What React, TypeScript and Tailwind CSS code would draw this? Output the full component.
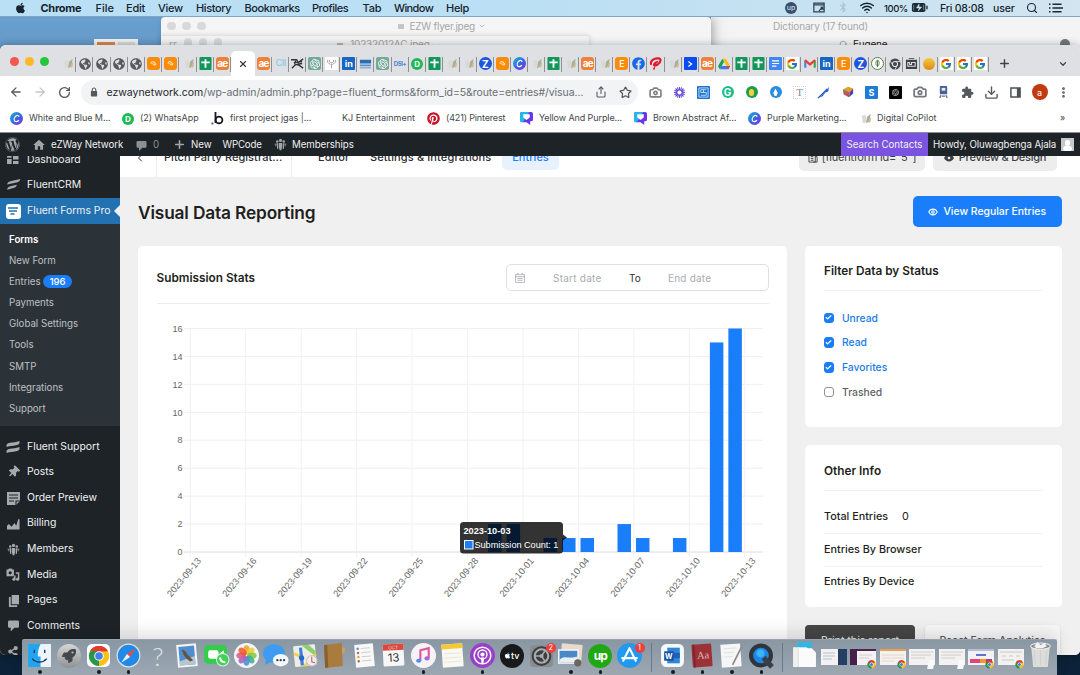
import React from "react";
import {
  ArrowLeft, ArrowRight, RotateCw, Share, Star, Camera, Download, MoreVertical,
  Plus, ChevronDown, ChevronLeft, Calendar, Eye, Check, X, Search, Wifi,
} from "lucide-react";
import { FcGoogle } from "react-icons/fc";
import { FaApple, FaFacebook, FaPinterest, FaWordpress, FaGlobeAmericas, FaShareAlt, FaThumbtack, FaBluetoothB, FaRocket, FaPuzzlePiece } from "react-icons/fa";
import { MdHome } from "react-icons/md";
import { SiOpenai } from "react-icons/si";

/* ---------- small glyphs ---------- */

const Badge = ({ className, children }: { className: string; children?: React.ReactNode }) => (
  <span className={"flex h-[13px] w-[13px] items-center justify-center overflow-hidden text-[9px] font-bold leading-none text-white " + className}>
    {children}
  </span>
);

const Leaf = () => (
  <svg viewBox="0 0 14 14" className="ml-[4px] h-[13px] w-[13px]">
    <path d="M1 4l4-1 1 8-4 1z" fill="#d9d9d7" />
    <path d="M5.500 12l1-7 4-3-1.500 8z" fill="#adae94" />
    <path d="M7 11l4-6-1 6z" fill="#cbb98e" />
  </svg>
);

const Canva = () => (
  <svg viewBox="0 0 14 14" className="h-[13px] w-[13px]">
    <defs>
      <linearGradient id="cv" x1="0" y1="0" x2="1" y2="1">
        <stop offset="0" stopColor="#12b9d6" />
        <stop offset=".55" stopColor="#3c62e0" />
        <stop offset="1" stopColor="#8a2be8" />
      </linearGradient>
    </defs>
    <circle cx="7" cy="7" r="7" fill="url(#cv)" />
    <path d="M9.800 5.200C9.400 3.600 7.800 3.300 6.500 4.200 4.600 5.500 4 8 5 9.600c.9 1.400 3.200 1 4.600-.8" fill="none" stroke="#fff" strokeWidth="1.300" />
  </svg>
);

const Sheets = () => (
  <svg viewBox="0 0 14 14" className="h-[13px] w-[13px]">
    <rect x=".5" width="13" height="14" rx="1" fill="#12965a" />
    <path d="M7 2.500v9M2.500 5.800h9" stroke="#fff" strokeWidth="2" />
  </svg>
);

const ChromeLogo = ({ className }: { className: string }) => (
  <svg viewBox="0 0 24 24" className={className}>
    <path d="M12 12L2.470 6.500A11 11 0 0 1 21.530 6.500z" fill="#e33b2e" />
    <path d="M12 12L21.530 6.500A11 11 0 0 1 12 23z" fill="#fbc116" />
    <path d="M12 12v11A11 11 0 0 1 2.470 6.500z" fill="#279847" />
    <path d="M12 6.800h9.700L16.500 14.600z" fill="#fbc116" />
    <path d="M2.470 6.500L7.500 14.600 12 6.800z" fill="#279847" />
    <path d="M2.470 6.500L12 6.800H21.700A11 11 0 0 0 2.470 6.500z" fill="#e33b2e" />
    <circle cx="12" cy="12" r="5.200" fill="#fff" />
    <circle cx="12" cy="12" r="4.100" fill="#3f7fee" />
  </svg>
);

const Tube = () => (
  <svg viewBox="0 0 14 14" className="h-[13px] w-[13px]">
    <path d="M2 0h10a2 2 0 0 1 2 2v6a2 2 0 0 1-2 2h-1v4L7 11H2a2 2 0 0 1-2-2V2a2 2 0 0 1 2-2z" fill="#6a35e8" />
    <path d="M0 2a2 2 0 0 1 2-2h8L3 11H2a2 2 0 0 1-2-2z" fill="#25b6e8" />
    <path d="M3.500 2.500h7V6L7 8.500 3.500 6z" fill="#fff" />
  </svg>
);

const Fluent = ({ className }: { className: string }) => (
  <svg viewBox="0 0 16 14" className={className}>
    <path d="M0.500 6.500C1 3.500 3 2.800 5.500 2.200L16 0c-.5 2.500-2 3.600-4.500 4.100zM0.500 12.500C1 9.500 3 8.800 5.500 8.200l6.500-1.400c-.5 2.300-2 3.200-4 3.700z" fill="currentColor" />
  </svg>
);

const FluentWide = ({ className }: { className: string }) => (
  <svg viewBox="0 0 14 12" className={className}>
    <path d="M.5 6V4C1 2.500 2.500 2.200 4 1.800c3-.8 6-.3 9.500-1.800v2c-.5 1.500-2 1.800-3.500 2.200C7 5 4 4.500.5 6zM.5 12v-2c.5-1.500 2-1.800 3.500-2.200 3-.8 6-.3 9.500-1.800v2c-.5 1.500-2 1.800-3.500 2.200C7 11 4 10.500.5 12z" fill="currentColor" />
  </svg>
);

const Bubble = ({ className }: { className: string }) => (
  <svg viewBox="0 0 12 12" className={className} fill="currentColor">
    <path d="M1.500 0h9A1.500 1.500 0 0 1 12 1.500v5A1.500 1.500 0 0 1 10.500 8H7l-4 4V8H1.500A1.500 1.500 0 0 1 0 6.500v-5A1.500 1.500 0 0 1 1.500 0z" />
  </svg>
);

const People = ({ className }: { className: string }) => (
  <svg viewBox="0 0 16 16" className={className} fill="currentColor">
    <circle cx="8" cy="3" r="2" />
    <circle cx="4" cy="4.200" r="1.500" />
    <circle cx="12" cy="4.200" r="1.500" />
    <path d="M6 6h4v5l-1 4H7l-1-4zM2.800 6.500h2.400v7H4zM10.800 6.500h2.400L12 13.500h-1.200zM.6 7h1.500v4zM13.900 7h1.500l-1.500 4z" />
  </svg>
);

type Fav = string;

const Favicon = ({ kind }: { kind: Fav }) => {
  switch (kind) {
    case "leaf": return <Leaf />;
    case "globe": return <FaGlobeAmericas className="h-[12px] w-[12px] text-[#565a5e]" />;
    case "orange": return <Badge className="rounded-[3px] bg-[#fb8c0a]"><svg viewBox="0 0 12 12" className="h-[9px] w-[9px]"><path d="M3 6.500a2.200 2.200 0 0 1 3.500-2.500L9 6.500a1.500 1.500 0 0 1-2.500 1L4.500 5.800" fill="none" stroke="#ffe2b4" strokeWidth="1.500" /></svg></Badge>;
    case "sheets": return <Sheets />;
    case "ae": return <Badge className="rounded-[3px] bg-[#ee8038] pb-[1px] text-[10px] tracking-[-0.800px]">ae</Badge>;
    case "cii": return <span className="text-[9px] font-semibold tracking-[-0.500px] text-[#93cde6]">CII</span>;
    case "run": return <svg viewBox="0 0 14 14" className="h-[13px] w-[13px]"><path d="M0 3h6l2 3 5-4M1 12l4-4 4 1 4 3M3 6l9-1M5 4L4 8M6 8l6-1" stroke="#333" strokeWidth="1.500" fill="none" /></svg>;
    case "gpt": return <Badge className="rounded-[2px] bg-[#74a898]"><SiOpenai className="h-[10px] w-[10px]" /></Badge>;
    case "sketch": return <span className="flex h-[13px] w-[13px] items-center justify-center bg-white"><svg viewBox="0 0 12 12" className="h-[11px] w-[11px]"><path d="M2 2c-1 2 0 4 3 5M10 2c1 2 0 4-3 5M6 6v5M4 2c-1 2 0 3 2 3s3-1 2-3" stroke="#a59a94" fill="none" /></svg></span>;
    case "in": return <Badge className="rounded-[1px] bg-[#1766c2]">in</Badge>;
    case "train": return <svg viewBox="0 0 14 14" className="h-[13px] w-[13px]"><path d="M1 3h12v4H1z" fill="#2d6db5" /><path d="M1 8h12v2H1z" fill="#5b8fcb" /><path d="M1 11.500h12" stroke="#8fb0d8" strokeWidth="1.500" /></svg>;
    case "dsk": return <span className="text-[6px] font-bold tracking-[-0.400px] text-[#4e86d6]">DSI+</span>;
    case "wa": return <span className="flex h-[12px] w-[12px] items-center justify-center rounded-full bg-[#1eb953] text-[8px] font-bold leading-none text-white">D</span>;
    case "z": return <span className="flex h-[13px] w-[13px] items-center justify-center rounded-full bg-[#1d56dc] text-[10px] font-bold leading-none text-white">Z</span>;
    case "canva": return <Canva />;
    case "c": return <Badge className="rounded-[3px] bg-[#fb8c0a] font-medium">E</Badge>;
    case "fb": return <FaFacebook className="h-[13px] w-[13px] text-[#1769ea]" />;
    case "airtel": return <svg viewBox="0 0 14 14" className="h-[13px] w-[13px]"><path d="M2.500 8.500C.5 4 6 1 10 1.500c3.500.5 3 4-.5 6.500-2 1.500-4.500 1.500-4 0 .5-1.500 3-3 4-2.500" fill="none" stroke="#e01a2c" strokeWidth="2.300" /><path d="M7 9l-1 5-2-1z" fill="#e01a2c" /></svg>;
    case "blue": return <Badge className="rounded-[1px] bg-[#0b4bf2]"><svg viewBox="0 0 10 10" className="h-[8px] w-[8px]"><path d="M3 2l4 3-4 3" fill="none" stroke="#fff" strokeWidth="1.500" /></svg></Badge>;
    case "drive": return <svg viewBox="0 0 14 14" className="h-[12px] w-[12px]"><path d="M5 1h4l5 8h-4z" fill="#fbbc05" /><path d="M5 1l2 3.500L2.200 13 0 9.500z" fill="#18a05c" /><path d="M4 9.300h10L12 13H2.200z" fill="#3d7de8" /><path d="M10 9.300h4L12 13z" fill="#e34133" /></svg>;
    case "docs": return <Badge className="rounded-[1px] bg-[#4285f4]"><svg viewBox="0 0 10 10" className="h-[9px] w-[9px]"><path d="M1 2h8M1 5h8M1 8h5" stroke="#fff" strokeWidth="1.300" /></svg></Badge>;
    case "g": return <span className="flex h-[13px] w-[13px] items-center justify-center bg-white"><FcGoogle className="h-[12px] w-[12px]" /></span>;
    case "gmail": return <svg viewBox="0 0 14 12" className="h-[11px] w-[12px]"><path d="M1.500 11V2.500" stroke="#4285f4" strokeWidth="2.500" /><path d="M12.500 11V2.500" stroke="#34a853" strokeWidth="2.500" /><path d="M1 2l6 5 6-5" stroke="#ea4335" strokeWidth="2.800" fill="none" /></svg>;
    case "ring": return <span className="flex h-[13px] w-[13px] items-center justify-center rounded-full border border-[#5b7f4e] bg-white"><svg viewBox="0 0 10 10" className="h-[9px] w-[9px]"><path d="M5 1v8" stroke="#5b7f4e" strokeWidth="1.500" /><ellipse cx="5" cy="4.500" rx="2" ry="3" stroke="#5b7f4e" fill="none" strokeWidth=".8" /></svg></span>;
    case "darkchrome": return <svg viewBox="0 0 14 14" className="h-[12px] w-[12px]"><circle cx="7" cy="7" r="6.500" fill="#44474a" /><circle cx="7" cy="7" r="3" fill="none" stroke="#dfe0e4" strokeWidth="1.200" /><path d="M7 4h6M4.400 8.500L1.500 3.600M9.600 8.500L7 13.500" stroke="#dfe0e4" /></svg>;
    case "hq": return <svg viewBox="0 0 14 14" className="h-[13px] w-[13px]"><path d="M1 3h3V1h6v2h3v10H1z" fill="#3e4144" /><path d="M3 2.500h8M3 6h2v2h2V6h4v4H3z" fill="none" stroke="#dfe0e4" strokeWidth="1.100" /></svg>;
    case "ball": return <span className="h-[12px] w-[12px] rounded-full bg-gradient-to-b from-[#f7c93e] to-[#d98a12]" />;
    default: return null;
  }
};

const leftTabs: Fav[] = ["leaf", "globe", "globe", "globe", "globe", "orange", "orange", "leaf", "sheets", "ae"];
const rightTabs: Fav[] = [
  "ae", "cii", "run", "gpt", "sketch", "in", "train", "gpt", "dsk", "wa", "sheets", "leaf", "leaf", "z", "orange", "canva",
  "leaf", "sheets", "leaf", "ae", "leaf", "c", "fb", "airtel", "leaf", "blue", "ae", "drive", "sheets", "sheets", "docs",
  "g", "gmail", "in", "c", "z", "ring", "darkchrome", "hq", "ball", "g", "g", "g",
];

const Tab = ({ kind }: { kind: Fav }) => (
  <div className="relative flex min-w-0 flex-1 items-center justify-center">
    <Favicon kind={kind} />
    <span className="absolute right-0 top-[2px] h-[15px] w-px bg-[#8e9094]" />
  </div>
);

/* ---------- desktop behind the browser ---------- */

const MenuBar = () => (
  <div className="relative z-10 flex h-[16.500px] items-center border-b border-[#7fa6c4] bg-gradient-to-r from-[#bae0f6] via-[#bbdff3] to-[#d2e5f0] text-[11px] font-medium text-[#15242f] [&>span]:pt-[1px]">
    <FaApple className="ml-[15px] h-[12px] w-[11px]" />
    <span className="ml-[14.500px] w-[55px] font-bold tracking-[-0.300px]">Chrome</span>
    <span className="w-[30.500px]">File</span>
    <span className="w-[32px] tracking-[-0.200px]">Edit</span>
    <span className="w-[38px] tracking-[-0.250px]">View</span>
    <span className="w-[48.500px] tracking-[-0.400px]">History</span>
    <span className="w-[67.500px] tracking-[-0.430px]">Bookmarks</span>
    <span className="w-[50.500px] tracking-[-0.450px]">Profiles</span>
    <span className="w-[31.500px] tracking-[-0.200px]">Tab</span>
    <span className="w-[52px] tracking-[-0.600px]">Window</span>
    <span className="w-[30px] tracking-[-0.300px]">Help</span>
    <span className="flex-1" />
    <span className="flex h-[12px] w-[12px] items-center justify-center rounded-full bg-[#38506a] text-[7px] text-[#c8dceb]">up</span>
    <svg viewBox="0 0 14 12" className="ml-[16px] h-[11px] w-[12px]"><path d="M1 1h12v10H1zM1 3h12M7 10l5-5M9 5l3 3M8 8h5" fill="none" stroke="#2a3e50" strokeWidth="1.400" /></svg>
    <FaBluetoothB className="ml-[14px] h-[11px] w-[8px] text-[#a9bfce]" />
    <Wifi className="ml-[12px] h-[15px] w-[16px]" strokeWidth={2.400} />
    <span className="ml-[9px] w-[27px] text-[9.500px] tracking-[-0.450px]">100%</span>
    <svg viewBox="0 0 18 10" className="h-[9px] w-[18px]"><rect width="15" height="10" rx="2" fill="#1d2b36" /><rect x="16" y="3" width="1.500" height="4" fill="#1d2b36" /><path d="M8 1L5 5.500h3L7 9l4-4.500H8zM2 2v6M13 2v6" fill="#c9e0ee" stroke="#c9e0ee" strokeWidth=".5" /></svg>
    <span className="ml-[11px] mt-[2px] w-[53px] whitespace-nowrap text-[10.500px] tracking-[-0.200px]">Fri 08:08</span>
    <span className="mt-[2px] w-[33px] text-[10.500px] tracking-[-0.100px]">user</span>
    <Search className="h-[12px] w-[12px]" strokeWidth={2.200} />
    <svg viewBox="0 0 14 10" className="ml-[11px] mr-[17px] h-[10px] w-[14px]"><path d="M0 1.200h1.500M3.500 1.200h9M0 5h1.500M3.500 5h10.500M0 8.800h1.500M3.500 8.800h9" stroke="#1a2833" strokeWidth="1.400" /></svg>
  </div>
);

const Dots = () => (
  <span className="flex gap-[6.500px]">
    <i className="h-[8.500px] w-[8.500px] rounded-full bg-[#d9d9d9]" />
    <i className="h-[8.500px] w-[8.500px] rounded-full bg-[#d9d9d9]" />
    <i className="h-[8.500px] w-[8.500px] rounded-full bg-[#d9d9d9]" />
  </span>
);

const BackWindows = () => (
  <>
    <div className="absolute left-[94px] top-[39px] flex h-[10px] w-[44px] items-start bg-[#f0f1f3]">
      <span className="ml-[3px] mt-[3px] h-[5px] w-[18px] bg-[#d98a50]" />
      <span className="ml-[3px] mt-[3px] h-[5px] w-[17px] bg-[#dcdcdc]" />
    </div>
    <div className="absolute left-[711px] top-[17px] flex h-[40px] w-[369px] flex-col bg-gradient-to-r from-[#ececec] via-[#f4f4f4] via-5% to-[#f4f4f4] text-[#a8a8a8]">
      <span className="mt-[3px] pl-[62px] text-[10px] leading-[12px] tracking-[-0.150px]">Dictionary (17 found)</span>
      <div className="mt-[6px] flex items-center pl-[128px] text-[10px] leading-[12px] text-[#222]">
        <Search className="h-[9px] w-[9px] text-[#999]" />
        <span className="ml-[5px] tracking-[-0.200px]">Eugene</span>
        <span className="ml-[173px] h-[10px] w-[10px] rounded-full bg-[#777]" />
      </div>
    </div>
    <div className="absolute left-[161px] top-[17px] h-[40px] w-[550px] rounded-t-[4px] bg-[#f5f5f5] shadow-[3px_2px_8px_rgba(0,0,0,0.250)]">
      <div className="flex h-[18px] items-center pl-[6px] text-[10px] text-[#a6a6a6]">
        <Dots />
        <span className="ml-[192px] h-[5px] w-[6px] bg-[#c5c5c5]" />
        <span className="ml-[6px] tracking-[-0.250px]">EZW flyer.jpeg</span>
        <ChevronDown className="ml-[3px] h-[8px] w-[8px]" />
      </div>
      <div className="flex h-[20px] w-[429px] rounded-tr-[4px] border-r border-t border-[#e2e2e2] bg-[#f3f3f3] pl-[8px] pt-[2px] text-[10px] leading-[12px] text-[#a3a3a3] shadow-[0_0_5px_rgba(0,0,0,0.120)]">
        <span className="mr-[7px]">rr</span>
        <Dots />
        <span className="ml-[115px] mt-[5px] h-[5px] w-[6px] bg-[#b5b5b5]" />
        <span className="ml-[7px] tracking-[-0.200px]">10232012AC.jpeg ⌄</span>
      </div>
    </div>
  </>
);

/* ---------- browser chrome ---------- */

const TabStrip = () => (
  <div className="flex h-[31px] bg-[#dfe0e4] pt-[6px]">
    <div className="ml-[10px] mt-[6px] flex gap-[6px]">
      <i className="h-[9px] w-[9px] rounded-full bg-[#f5564f]" />
      <i className="h-[9px] w-[9px] rounded-full bg-[#fbb928]" />
      <i className="h-[9px] w-[9px] rounded-full bg-[#26c63b]" />
    </div>
    <div className="ml-[10px] flex h-[24px] w-[172px] items-start pt-[3.500px] [&>div]:h-[18px]">
      {leftTabs.map((k, i) => <Tab key={i} kind={k} />)}
    </div>
    <div className="flex h-[25px] w-[24px] items-center justify-center rounded-t-[5px] bg-white">
      <X className="h-[10px] w-[10px] text-[#333]" strokeWidth={2.600} />
    </div>
    <div className="flex h-[24px] w-[734px] items-start pt-[3.500px] [&>div]:h-[18px]">
      {rightTabs.map((k, i) => <Tab key={i} kind={k} />)}
    </div>
    <Plus className="ml-[9px] mt-[6px] h-[13px] w-[13px] text-[#3f4246]" strokeWidth={2.600} />
    <ChevronDown className="ml-[46.500px] mt-[8px] h-[10px] w-[10px] text-[#3f4246]" strokeWidth={3} />
  </div>
);

const extensions: React.ReactNode[] = [
  <Camera className="h-[13px] w-[13px] text-[#7c8085]" strokeWidth={3} />,
  <svg viewBox="0 0 14 14" className="h-[13px] w-[13px]"><path d="M7 1v12M1 7h12M2.700 2.700l8.600 8.600M11.300 2.700l-8.600 8.600M4.700 1.500l4.600 11M9.300 1.500l-4.600 11M1.500 4.700l11 4.600M12.500 4.700l-11 4.600" stroke="#6a4fd6" strokeWidth="1.200" /><circle cx="7" cy="7" r="2.200" fill="#fff" /></svg>,
  <Badge className="rounded-[1px] bg-[#1d74d0]"><svg viewBox="0 0 12 12" className="h-[11px] w-[11px]"><path d="M1 1h10v10H1zM9 3H3v3h6v3H3M6 3v3" fill="none" stroke="#c5def5" /></svg></Badge>,
  <span className="flex h-[12px] w-[12px] items-center justify-center rounded-full bg-[#19bd8b] text-[10px] font-bold leading-none text-white">G</span>,
  <span className="flex h-[12px] w-[12px] items-center justify-center rounded-full bg-[#1e9c50]"><i className="h-[7px] w-[5px] rounded-full bg-[#f3d13a]" /></span>,
  <span className="flex h-[12px] w-[12px] items-center justify-center rounded-full bg-[#2c8ce0]"><svg viewBox="0 0 10 10" className="h-[9px] w-[9px]"><path d="M5 .5l2.500 5L6 9H4L2.500 5.500z" fill="#fff" /></svg></span>,
  <span className="border border-dotted border-[#d2d2d2] px-[2px] text-[11px] font-normal leading-none text-[#8a8a8a] [font-family:'Liberation_Serif',serif]">T</span>,
  <svg viewBox="0 0 14 14" className="h-[13px] w-[13px]"><path d="M1 13l4-3 8-9-1 5-3 1-3 4z" fill="#2458d0" /><path d="M1 13L11 3" stroke="#2458d0" strokeWidth="1.200" /></svg>,
  <svg viewBox="0 0 14 14" className="h-[12px] w-[12px]"><path d="M1 4l6-3 6 2-4 4z" fill="#e99a2c" /><path d="M1 4l8 3-1 6-6-3z" fill="#d34a56" /><path d="M13 3L9 7 8 13l5-4z" fill="#5048a0" /><path d="M1 4l5 2-2 3z" fill="#3f9e68" /></svg>,
  <Badge className="rounded-[1px] bg-[#1e7bd6]">S</Badge>,
  <Badge className="rounded-[1px] bg-black"><SiOpenai className="h-[7px] w-[7px] text-[#ddd]" /></Badge>,
  <Camera className="h-[14px] w-[14px] text-[#74787c]" strokeWidth={3} />,
  <svg viewBox="0 0 12 14" className="h-[13px] w-[11px]"><rect x="2" y="0" width="8" height="9" rx="1" fill="#4a5f9c" /><rect x="4" y="2" width="4" height="3" fill="#e7ecf8" /><path d="M3 10l-1 3M9 10l1 3M4 11h4" stroke="#6a7184" strokeWidth="1.400" /></svg>,
  <svg viewBox="0 0 24 24" className="h-[13px] w-[13px]"><path d="M20.500 11H19V7a2 2 0 0 0-2-2h-4V3.500a2.500 2.500 0 0 0-5 0V5H4a2 2 0 0 0-2 2v3.800h1.500a2.700 2.700 0 0 1 0 5.400H2V20a2 2 0 0 0 2 2h3.800v-1.500a2.700 2.700 0 0 1 5.400 0V22H17a2 2 0 0 0 2-2v-4h1.500a2.500 2.500 0 0 0 0-5z" fill="#54585c" /></svg>,
  <Download className="h-[15px] w-[15px] text-[#54585c]" strokeWidth={2.200} />,
  <svg viewBox="0 0 12 12" className="h-[11px] w-[11px]"><path d="M1 1h10v10H1z" fill="none" stroke="#4d5155" strokeWidth="1.600" /><path d="M7.500 1H11v10H7.500z" fill="#4d5155" /></svg>,
  <span className="flex h-[16px] w-[16px] items-center justify-center rounded-full bg-[#c23a10] text-[9px] leading-none text-white">a</span>,
  <MoreVertical className="h-[13px] w-[13px] text-[#54585c]" strokeWidth={3} />,
];

const Toolbar = () => (
  <div className="flex h-[30px] items-center bg-white pt-[2px]">
    <ArrowLeft className="ml-[9px] h-[14px] w-[14px] shrink-0 text-[#54585c]" strokeWidth={2.200} />
    <ArrowRight className="ml-[10px] h-[14px] w-[14px] shrink-0 text-[#c3c5c8]" strokeWidth={2.200} />
    <RotateCw className="ml-[11px] h-[13px] w-[13px] shrink-0 text-[#54585c]" strokeWidth={2.400} />
    <div className="ml-[10px] flex h-[25px] w-[557px] shrink-0 items-center rounded-full bg-[#f1f3f4] pl-[9px]">
      <svg viewBox="0 0 9 11" className="h-[10px] w-[8px]"><rect x="1" y="4.500" width="7" height="6" rx=".8" fill="#55595d" /><path d="M2.500 5V3a2 2 0 0 1 4 0v2" fill="none" stroke="#55595d" strokeWidth="1.200" /></svg>
      <span className="ml-[8.500px] w-[483px] shrink-0 whitespace-nowrap pt-[2px] text-[10.500px] tracking-[-0.080px] text-[#6a6e73]">
        <span className="tracking-[-0.020px] text-[#23262a]">ezwaynetwork.com</span>/wp-admin/admin.php?page=fluent_forms&amp;form_id=5&amp;route=entries#/visua...
      </span>
      <Share className="ml-[5.500px] h-[12px] w-[12px] shrink-0 text-[#5a5e63]" strokeWidth={2.200} />
      <Star className="ml-[11.500px] h-[13px] w-[13px] shrink-0 text-[#54585c]" strokeWidth={2.200} />
    </div>
    <div className="ml-[5.500px] flex">
      {extensions.map((e, i) => <span key={i} className="flex w-6 items-center justify-center">{e}</span>)}
    </div>
  </div>
);

const Bookmarks = () => (
  <div className="flex h-[26px] items-center whitespace-nowrap bg-white pb-[1px] pl-[10px] text-[9px] text-[#43474b] [&>span]:flex [&>span]:shrink-0 [&>span]:items-center [&>span]:gap-[6px]">
    <span className="w-[112px] tracking-[-0.050px]"><Canva />White and Blue M...</span>
    <span className="w-[89px]"><Favicon kind="wa" />(2) WhatsApp</span>
    <span className="w-[131px] tracking-[-0.030px]">
      <svg viewBox="0 0 13 13" className="h-[13px] w-[13px]"><path d="M4.500 0v11" stroke="#15171c" strokeWidth="1.800" /><circle cx="8" cy="8" r="3.400" fill="none" stroke="#15171c" strokeWidth="1.800" /><circle cx="1.400" cy="11.500" r="1.100" fill="#4338d8" /></svg>
      first project jgas |...
    </span>
    <span className="w-[85px]">KJ Entertainment</span>
    <span className="w-[93px] tracking-[-0.150px]"><FaPinterest className="h-[13px] w-[13px] text-[#c9152b]" />(421) Pinterest</span>
    <span className="w-[114px] tracking-[-0.100px]"><Tube />Yellow And Purple...</span>
    <span className="w-[114px] tracking-[-0.080px]"><Tube />Brown Abstract Af...</span>
    <span className="w-[111px] tracking-[-0.050px]"><Canva />Purple Marketing...</span>
    <span className="w-[201px]"><i className="-ml-[2px] w-[14px]"><Leaf /></i>Digital CoPilot</span>
    <span className="text-[9px]">»</span>
  </div>
);

/* ---------- WordPress ---------- */

const AdminBar = () => (
  <div className="relative z-10 flex h-[24px] shrink-0 items-center whitespace-nowrap border-t border-[#8b8e92] bg-[#1d2327] text-[9.700px] text-[#f0f0f1] [&>span]:pt-[1.500px]">
    <FaWordpress className="ml-[5px] h-[15px] w-[15px] text-[#a0a5aa]" />
    <MdHome className="ml-[12px] h-[14px] w-[14px] text-[#a0a5aa]" />
    <span className="ml-[5px] w-[85px] tracking-[-0.080px]">eZWay Network</span>
    <Bubble className="mt-[2px] h-[10px] w-[11px] text-[#8c9196]" />
    <span className="ml-[6px] w-[20px] text-[#8c9196]">0</span>
    <Plus className="h-[13px] w-[13px] text-[#a0a5aa]" strokeWidth={3} />
    <span className="ml-[5px] w-[31.500px]">New</span>
    <span className="w-[51.500px] tracking-[-0.150px]">WPCode</span>
    <People className="h-[13px] w-[13px] text-[#a0a5aa]" />
    <span className="ml-[5px] tracking-[-0.050px]">Memberships</span>
    <span className="flex-1" />
    <span className="flex h-full w-[87px] items-center justify-center bg-[#7a54e0]">Search Contacts</span>
    <span className="ml-[5px] w-[128px] tracking-[-0.100px]">Howdy, Oluwagbenga Ajala</span>
    <i className="mr-[6px] flex h-[13px] w-[13px] flex-col items-center overflow-hidden bg-[#c8c8c8]">
      <i className="mt-[2px] h-[6px] w-[5px] rounded-full bg-white" />
      <i className="h-[6px] w-[9px] rounded-full bg-white" />
    </i>
  </div>
);

const SideItem = ({ icon, label }: { icon: React.ReactNode; label: string }) => (
  <div className="flex h-[25.650px] shrink-0 items-center gap-[7px] pl-[6px] text-[10.400px] text-[#f0f0f1]">
    <span className="flex w-[14px] shrink-0 justify-center text-[#a7aaad]">{icon}</span>
    <span className="whitespace-nowrap">{label}</span>
  </div>
);

const submenu = ["Forms", "New Form", "Entries", "Payments", "Global Settings", "Tools", "SMTP", "Integrations", "Support"];

const Sidebar = () => (
  <aside className="flex w-[120px] shrink-0 flex-col overflow-hidden bg-[#1d2327]">
    <div className="-mt-[9px]">
      <SideItem
        icon={<svg viewBox="0 0 13 12" className="h-[11px] w-[12px]"><path d="M0 1h5v3H0zM6.500 1h6v5h-6zM0 5.500h5V11H0zM6.500 7.500h6V11h-6z" fill="currentColor" /></svg>}
        label="Dashboard"
      />
    </div>
    <SideItem icon={<Fluent className="h-[12px] w-[15px] shrink-0" />} label="FluentCRM" />
    <div className="relative bg-[#2271b1]">
      <SideItem
        icon={<span className="flex h-[15px] w-[15px] shrink-0 items-center justify-center rounded-[3px] bg-white"><svg viewBox="0 0 10 8" className="h-[8px] w-[10px]"><path d="M0 1h10M1 4h8M2.500 7h4" stroke="#2271b1" strokeWidth="1.700" /></svg></span>}
        label="Fluent Forms Pro"
      />
      <svg viewBox="0 0 6 12" className="absolute right-0 top-[7px] h-[12px] w-[6px]"><path d="M6 0v12L0 6z" fill="#f0f0f1" /></svg>
    </div>
    <div className="flex h-[202px] shrink-0 flex-col bg-[#2c3338] pl-[9px] pt-[5px] text-[9.700px] text-[#bcc0c4]">
      {submenu.map((s, i) => (
        <div key={s} className={"flex h-[21.150px] shrink-0 items-center whitespace-nowrap " + (i === 0 ? "font-semibold text-white" : "")}>
          {s}
          {s === "Entries" && <span className="ml-[2.500px] flex h-[13px] w-[29px] items-center justify-center rounded-full bg-[#1a7efb] text-[9.500px] font-medium text-white">196</span>}
        </div>
      ))}
    </div>
    <div className="mt-[8px]">
      <SideItem icon={<FluentWide className="h-[12px] w-[14px]" />} label="Fluent Support" />
      <SideItem icon={<FaThumbtack className="h-[12px] w-[11px] rotate-45" />} label="Posts" />
      <SideItem icon={<svg viewBox="0 0 13 13" className="h-[13px] w-[13px] shrink-0"><path d="M0 0h13v9l-4 4H0z" fill="currentColor" /><path d="M2 3h9M2 6h9M2 9h5M9 13V9h4" stroke="#1d2327" strokeWidth="1.100" fill="none" /></svg>} label="Order Preview" />
      <SideItem icon={<svg viewBox="0 0 14 12" className="h-[12px] w-[13px]"><path d="M0 12V8l2-2 3 3 3-4 2 3 2-7h1.500v11z" fill="currentColor" /></svg>} label="Billing" />
      <SideItem icon={<People className="h-[13px] w-[13px]" />} label="Members" />
      <SideItem icon={<svg viewBox="0 0 14 14" className="h-[13px] w-[14px]"><path d="M0 1.500h2L2.500.5h3l.5 1h2V9H0z" fill="currentColor" /><circle cx="4" cy="5.200" r="1.700" fill="#1d2327" /><path d="M10 5.500h3V12M9 11.500V8" fill="none" stroke="currentColor" strokeWidth="1.600" /><circle cx="8" cy="12" r="1.700" fill="currentColor" /><circle cx="12" cy="12" r="1.700" fill="currentColor" /></svg>} label="Media" />
      <SideItem icon={<svg viewBox="0 0 12 13" className="h-[12px] w-[11px]"><path d="M4 0h8v10H4z M1 2h2v9h7v2H1z" fill="currentColor" /></svg>} label="Pages" />
      <SideItem icon={<Bubble className="h-[12px] w-[11px]" />} label="Comments" />
      <SideItem icon={<FaShareAlt className="h-[11px] w-[12px]" />} label="" />
    </div>
  </aside>
);

const PageHeader = () => (
  <div className="flex h-[21px] shrink-0 items-end overflow-hidden bg-white">
    <div className="flex h-[41px] w-full shrink-0 items-center whitespace-nowrap pt-[2px] text-[11px] font-medium text-[#2a2d31]">
      <ChevronLeft className="ml-[14px] h-[12px] w-[12px] shrink-0" />
      <span className="ml-[10px] flex h-full w-[136px] shrink-0 items-center border-x border-[#ececec] pl-[7px] pt-[1px] tracking-[0.050px]">Pitch Party Registrat...</span>
      <span className="ml-[26px] w-[52px] pt-[1px] tracking-[0.100px]">Editor</span>
      <span className="w-[132px] pt-[1px] tracking-[0.120px]">Settings &amp; Integrations</span>
      <span className="flex h-[24px] w-[57px] items-center justify-center rounded-[5px] bg-[#e8f2ff] pt-[1px] text-[#1a7efb]">Entries</span>
      <span className="flex-1" />
      <span className="flex h-[26px] w-[126px] items-center justify-center gap-[4px] rounded-[5px] bg-[#ededed] pt-[1px] font-normal text-[#3c3f43]">
        <svg viewBox="0 0 11 11" className="h-[10px] w-[10px]"><path d="M1 2h7v8H1zM8 4h2v6H6M3 4h3M3 6h3M3 8h3" fill="none" stroke="currentColor" /></svg>
        <span className="tracking-[-0.200px]">[fluentform id="5"]</span>
      </span>
      <span className="ml-[8px] mr-[23px] flex h-[26px] w-[124px] items-center justify-center gap-[5px] rounded-[5px] bg-[#ededed] pt-[1px] text-[#3c3f43]">
        <svg viewBox="0 0 14 10" className="h-[8px] w-[10px]"><path d="M0 5c3-6.500 11-6.500 14 0-3 6.500-11 6.500-14 0z" fill="currentColor" /><circle cx="7" cy="5" r="1.800" fill="#ededed" /></svg>
        <span className="tracking-[-0.250px]">Preview &amp; Design</span>
      </span>
    </div>
  </div>
);

const DAY = 18.48;
const UNIT = 13.97;
const bars: [number, number][] = [[16, 2], [17, 2], [19, 1], [20, 1], [21, 1], [23, 2], [24, 1], [26, 1], [28, 15], [29, 16]];
const dates = ["2023-09-13", "2023-09-16", "2023-09-19", "2023-09-22", "2023-09-25", "2023-09-28", "2023-10-01", "2023-10-04", "2023-10-07", "2023-10-10", "2023-10-13"];

const Chart = () => (
  <svg viewBox="138 310 649 320" className="h-[320px] w-[649px] shrink-0">
    {[0, 2, 4, 6, 8, 10, 12, 14, 16].map((v) => (
      <g key={v}>
        <path d={`M184 ${552 - v * UNIT}H763`} stroke={v === 0 ? "#dcdcdc" : "#efefef"} />
        <text x="182.500" y={555.200 - v * UNIT} textAnchor="end" fontSize="9" fill="#666" fontFamily="Liberation Sans">{v}</text>
      </g>
    ))}
    {dates.map((d, i) => (
      <g key={d}>
        <path d={`M${190.300 + i * 3 * DAY} 328.500V557`} stroke="#f1f1f1" />
        <text transform={`translate(${201.700 + i * 3 * DAY} 561) rotate(-50)`} textAnchor="end" fontSize="9.300" fill="#666" fontFamily="Liberation Sans">{d}</text>
      </g>
    ))}
    {bars.map(([d, v]) => (
      <rect key={d} x={190 + (d + 0.5) * DAY - 6.800} y={552 - v * UNIT} width="13.500" height={v * UNIT} fill="#1a7efb" />
    ))}
    <path d="M463.500 522h96a3.500 3.500 0 0 1 3.500 3.500v9l4 3-4 3v9.500a3.500 3.500 0 0 1-3.500 3.500h-96a3.500 3.500 0 0 1-3.500-3.500v-24.500a3.500 3.500 0 0 1 3.500-3.500z" fill="#000" fillOpacity=".8" />
    <text x="463.500" y="534" fontSize="9.200" fontWeight="700" fill="#fff" fontFamily="Liberation Sans">2023-10-03</text>
    <rect x="464.500" y="540.500" width="8.500" height="8.500" fill="#1a7efb" stroke="#fff" />
    <text x="474.500" y="547.500" fontSize="9.100" fill="#fff" fontFamily="Liberation Sans">Submission Count: 1</text>
  </svg>
);

const StatusRow = ({ label, on }: { label: string; on?: boolean }) => (
  <div className={"flex h-[24.750px] items-center gap-[8px] text-[10.300px] font-medium " + (on ? "text-[#1a7ae8]" : "text-[#5d6167]")}>
    <span className={"-ml-[0.500px] flex h-[10.500px] w-[10.500px] items-center justify-center rounded-[3px] border " + (on ? "border-[#1a7efb] bg-[#1a7efb]" : "border-[#8d9197] bg-white")}>
      {on && <Check className="h-[7px] w-[7px] text-white" strokeWidth={4} />}
    </span>
    {label}
  </div>
);

const Content = () => (
  <main className="flex min-w-0 flex-1 flex-col overflow-hidden bg-[#f0f0f0] text-[#1e1f21]">
    <PageHeader />
    <div className="flex h-[68.500px] shrink-0 items-center justify-between pl-[18px] pr-[18px]">
      <h1 className="mt-[4px] text-[17.300px] font-semibold tracking-[-0.150px]">Visual Data Reporting</h1>
      <button className="flex h-[31px] w-[149.500px] items-center justify-center gap-[5px] whitespace-nowrap rounded-[5px] bg-[#1a7efb] pt-[2px] text-[10.400px] font-medium text-white">
        <Eye className="h-[10px] w-[10px]" strokeWidth={2.600} />View Regular Entries
      </button>
    </div>
    <div className="flex gap-[18px] pl-[18px]">
      <section className="flex h-[440px] w-[649px] shrink-0 flex-col rounded-[5px] bg-white">
        <div className="mx-[18.500px] flex h-[58px] shrink-0 items-center justify-between border-b border-[#ececec] pt-[7px]">
          <h2 className="mt-[1px] text-[11.800px] font-semibold">Submission Stats</h2>
          <div className="flex h-[27px] w-[263px] items-center rounded-[5px] border border-[#dcdfe6] text-[10px] text-[#a8abb2]">
            <svg viewBox="0 0 11 11" className="ml-[8px] h-[10px] w-[10px]"><path d="M.5 1.500h10v9H.5zM.5 4h10M3 0v2M8 0v2M2.500 6h6M2.500 8h6" fill="none" stroke="currentColor" strokeWidth=".9" /></svg>
            <span className="ml-[28.500px] w-[76px] whitespace-nowrap pt-[1px] tracking-[0.250px]">Start date</span>
            <span className="w-[39px] pt-[1px] text-[#303133]">To</span>
            <span className="pt-[1px] tracking-[0.200px]">End date</span>
          </div>
        </div>
        <div className="-mb-[10px] mt-[6.500px]"><Chart /></div>
      </section>
      <div className="flex w-[257px] shrink-0 flex-col">
        <section className="h-[181.500px] rounded-[5px] bg-white px-[19px] pt-[7px]">
          <h2 className="flex h-[38px] items-center border-b border-[#f1f1f1] text-[11.800px] font-semibold">Filter Data by Status</h2>
          <div className="mt-[15px]">
            <StatusRow label="Unread" on />
            <StatusRow label="Read" on />
            <StatusRow label="Favorites" on />
            <StatusRow label="Trashed" />
          </div>
        </section>
        <section className="mt-[18px] h-[162px] rounded-[5px] bg-white px-[19px] pt-[7px] text-[10.800px] font-medium">
          <h2 className="flex h-[38.500px] items-center border-b border-[#efefef] pt-[1px] text-[11.800px] font-semibold">Other Info</h2>
          <div className="mt-[11px] flex h-[32px] items-center border-b border-[#f1f1f1] pt-[1px]">Total Entries<span className="ml-[14px] font-normal">0</span></div>
          <div className="flex h-[33px] items-center border-b border-[#f1f1f1] pt-[1px]">Entries By Browser</div>
          <div className="flex h-[32px] items-center">Entries By Device</div>
        </section>
        <div className="mt-[18px] flex h-[30px] gap-[10px] text-[10.500px] font-medium">
          <span className="flex w-[110px] items-center justify-center rounded-[4px] bg-[#464646] pt-[2px] text-[#dedede]">Print this report</span>
          <span className="flex w-[135px] items-center justify-center whitespace-nowrap rounded-[4px] bg-[#f7f7f7] pt-[2px] text-[#5b5b5b] shadow-sm">Reset Form Analytics</span>
        </div>
      </div>
    </div>
  </main>
);

/* ---------- dock ---------- */

const S = ({ children }: { children: React.ReactNode }) => <svg viewBox="0 0 24 24" className="h-[25px] w-[25px] overflow-visible">{children}</svg>;

const petals = ["#f0a22c", "#e8d23a", "#8cc63f", "#3fb28a", "#4a8fd8", "#9a6cc0", "#e0598a", "#ee5a35"];

const Mini = ({ children, chrome, plain }: { children: React.ReactNode; chrome?: boolean; plain?: boolean }) => (
  <span className="relative">
    <svg viewBox="0 0 26 16" className="mt-[2px] h-[16px] w-[26px]"><rect width="26" height="16" fill="#f3f1f1" />{children}</svg>
    {chrome && <ChromeLogo className="absolute -bottom-[4px] right-0 h-[9px] w-[9px]" />}
    {plain && <i className="absolute -bottom-[4px] right-[1px] h-[9px] w-[6px] -skew-x-12 bg-[#fafafa]" />}
  </span>
);

const apps: { icon: React.ReactNode; open?: boolean; alert?: string }[] = [
  { open: true, icon: <S><rect x="1" y="1" width="22" height="22" fill="#eef5fa" /><path d="M1 1h12c-2 4-3 8-2.500 12H13v10H1z" fill="#22a5ee" /><path d="M5 15c4 4.500 10 4.500 14 0M7 6.500v3M17 6.500v3" stroke="#1d3555" strokeWidth="1.300" fill="none" /></S> },
  { icon: <span className="flex h-[24px] w-[24px] items-center justify-center rounded-full bg-gradient-to-b from-[#d5d6d6] to-[#8f9294]"><FaRocket className="h-[14px] w-[14px] text-[#43484c]" /></span> },
  { open: true, icon: <span className="flex h-[23px] w-[23px] items-center justify-center rounded-[5px] bg-white"><ChromeLogo className="h-[22px] w-[22px]" /></span> },
  { open: true, icon: <S><circle cx="12" cy="12" r="11.500" fill="#dfe5ea" /><circle cx="12" cy="12" r="10.300" fill="#2189e6" /><path d="M19 5l-5.500 8.500-3-3z" fill="#ee4b3b" /><path d="M5 19l5.500-8.500 3 3z" fill="#f1f1f1" /></S> },
  { icon: <span className="text-[26px] font-light leading-none text-[#dfe4e8] [font-family:Lato,sans-serif]">?</span> },
  { icon: <S><g transform="rotate(-5 12 12)"><rect x="2" y="1" width="19" height="22" fill="#f4f4f2" /><rect x="4" y="3" width="15" height="18" fill="#4f8fd0" /><path d="M4 17l15-4v8H4z" fill="#b8c6d2" /><path d="M7 6c2 0 4 2 5 5l5 6-3 1-4-4-2-4z" fill="#6a523a" /></g></S> },
  { icon: <S><rect x="0" y="2" width="22" height="18" rx="4" fill="#35cc4b" /><rect x="4" y="7" width="10" height="8" rx="2" fill="#fff" /><path d="M15 10l4-3v8z" fill="#fff" /><circle cx="18" cy="16" r="6" fill="#45d05a" stroke="#dff5e2" /><path d="M15.500 14c0 3 2 4.500 5 4.500" stroke="#fff" strokeWidth="2" fill="none" /></S> },
  { icon: <S><circle cx="12" cy="12" r="12" fill="#f5f5f5" />{petals.map((c, i) => <ellipse key={c} cx="12" cy="6.700" rx="3" ry="4.500" fill={c} fillOpacity=".88" transform={`rotate(${i * 45} 12 12)`} />)}</S> },
  { icon: <S><ellipse cx="10.500" cy="10" rx="10.500" ry="9" fill="#3d9cf2" /><path d="M3 15l-1 6 6-3z" fill="#3d9cf2" /><ellipse cx="17" cy="16.500" rx="7.500" ry="6" fill="#f4f7fa" /><circle cx="13.800" cy="16.500" r="1.100" fill="#2b4159" /><circle cx="17" cy="16.500" r="1.100" fill="#2b4159" /><circle cx="20.200" cy="16.500" r="1.100" fill="#2b4159" /></S> },
  { icon: <S><g transform="rotate(-6 12 12)"><rect x="1" y="2" width="21" height="20" rx="1" fill="#efeee4" /><path d="M9 2h7l6 7v5z" fill="#8fd06b" /><path d="M1 9l7 4v9M22 12L10 22" stroke="#f3cf4d" strokeWidth="2.500" fill="none" /><path d="M8 4v17" stroke="#3b7fe0" strokeWidth="3" /><circle cx="8" cy="14" r="2.600" fill="#2a68cf" /></g><circle cx="18" cy="17" r="5" fill="#efefef" stroke="#c5c5c5" /><path d="M18 13v5l3 1" stroke="#d55" fill="none" /></S> },
  { icon: <S><path d="M2 2l17-2 1 22-17 2z" fill="#a97b3c" /><path d="M2 2l3 0 1 21.500-3 .5z" fill="#876030" /><path d="M19 4l3 1v4l-2.500 1z" fill="#c9a266" /></S> },
  { icon: <S><g transform="rotate(-5 12 12)"><rect x="3" y="1" width="18" height="22" fill="#f8f8f8" /><path d="M9 5h9M9 9h9M9 13h9M9 17h9" stroke="#cfcfcf" /><circle cx="6" cy="5" r="1.200" fill="#4a8ee8" /><circle cx="6" cy="9" r="1.200" fill="#e2574a" /><circle cx="6" cy="13" r="1.200" fill="#f0a12b" /><circle cx="6" cy="17" r="1.200" fill="#8a6a55" /></g></S> },
  { icon: <S><g transform="rotate(-3 12 12)"><rect x="2" y="1" width="20" height="21" rx="1" fill="#f7f7f7" /><rect x="2" y="1" width="20" height="6" fill="#d9493f" /><text x="12" y="6" fontSize="4.500" textAnchor="middle" fill="#f7cdc9">OCT</text><text x="12" y="18" fontSize="11" textAnchor="middle" fill="#333">13</text></g></S> },
  { open: true, icon: <S><circle cx="12" cy="12" r="12" fill="#f6f3f6" /><path d="M9 17V7l8-2v9.500" fill="none" stroke="#e0559a" strokeWidth="2" /><ellipse cx="7.400" cy="17" rx="2.500" ry="2" fill="#4e8ff0" /><ellipse cx="15.400" cy="14.800" rx="2.500" ry="2" fill="#a768e0" /></S> },
  { icon: <S><g transform="rotate(-4 12 12)"><rect x="2" y="1" width="20" height="22" fill="#f9f8f1" /><rect x="2" y="1" width="20" height="4.500" fill="#f6c832" /><path d="M4 10h16M4 14h16M4 18h16" stroke="#e4e2d9" strokeWidth=".7" /></g></S> },
  { open: true, icon: <S><circle cx="12" cy="12" r="12" fill="#9a3fc9" /><circle cx="12" cy="12" r="8" fill="none" stroke="#fff" strokeWidth="1.400" /><circle cx="12" cy="11" r="4.300" fill="none" stroke="#fff" strokeWidth="1.300" /><circle cx="12" cy="11" r="2" fill="#fff" /><path d="M10.500 14h3l-.6 6h-1.800z" fill="#fff" /></S> },
  { icon: <span className="flex h-[24px] w-[24px] items-center justify-center rounded-full bg-[#17191b] text-[9px] font-medium leading-none text-white"><FaApple className="h-[7px] w-[7px]" />tv</span> },
  { alert: "2", icon: <S><rect x="1" y="2" width="22" height="21" rx="3" fill="#8a8d8f" /><circle cx="12" cy="12.500" r="9.500" fill="#3c3f42" /><circle cx="12" cy="12.500" r="6.500" fill="none" stroke="#a9acae" strokeWidth="2" /><circle cx="12" cy="12.500" r="2" fill="#a9acae" /><path d="M12 12.500H5M12 12.500l4-6M12 12.500l4 6" stroke="#a9acae" strokeWidth="1.400" /></S> },
  { open: true, icon: <S><rect x="3" y="1" width="20" height="16" fill="#e7dcc9" transform="rotate(5 12 9)" /><rect x="0" y="6" width="20" height="14" fill="#f2f3f4" /><rect x="1.500" y="7.500" width="17" height="11" fill="#4c87c8" /><path d="M1.500 16c5-5 9 0 17-3v5.500h-17z" fill="#e8edf0" /><circle cx="19" cy="19" r="3.500" fill="#6b6460" /></S> },
  { open: true, icon: <span className="flex h-[24px] w-[24px] items-center justify-center rounded-full bg-[#1fa812] text-[12px] font-bold leading-none tracking-[-1px] text-white">up</span> },
  { alert: "1", icon: <S><circle cx="12" cy="12" r="12" fill="#2398f0" /><path d="M12 5l6 12M12 5L6 17M5 14.500h14" stroke="#fff" strokeWidth="2" strokeLinecap="round" /></S> },
];

const apps2: React.ReactNode[] = [
  <S><rect x="1" y="1" width="22" height="22" rx="5" fill="#f7f8f9" /><rect x="7" y="4.500" width="12" height="15" fill="#2d86d8" /><path d="M7 9.500h12v5H7z" fill="#1d62b8" /><rect x="4" y="8" width="9" height="9" fill="#1a4fa0" /><text x="8.500" y="15" fontSize="7" fontWeight="700" textAnchor="middle" fill="#fff">W</text></S>,
  <S><g transform="rotate(-4 12 12)"><rect x="2" y="1" width="19" height="22" rx="1" fill="#9d3138" /><path d="M4 1v22" stroke="#7b2329" strokeWidth="1.500" /><text x="12.500" y="15" fontSize="10" textAnchor="middle" fill="#e3bdbd" fontFamily="Liberation Serif">Aa</text></g></S>,
  <S><g transform="rotate(-4 12 12)"><rect x="2" y="1" width="19" height="22" fill="#f6f6f6" /><path d="M5 5h12M5 9h10M5 13h8" stroke="#e2e2e2" /></g><path d="M22 3L13 21" stroke="#888b8e" strokeWidth="1.600" /></S>,
  <S><circle cx="11.500" cy="12" r="11.500" fill="#30353b" /><circle cx="11.500" cy="12" r="7.500" fill="#1e86e8" /><circle cx="11" cy="10" r="4" fill="#38b4f7" /><path d="M14 14l8 9" stroke="#3a4048" strokeWidth="5" /></S>,
];

const Slot = ({ children, open, alert }: { children: React.ReactNode; open?: boolean; alert?: string }) => (
  <div className="relative flex h-full w-[29.500px] shrink-0 justify-center pt-[3.500px]">
    <span className="flex h-[24px] items-center">{children}</span>
    {open && <i className="absolute bottom-[1.500px] left-[13px] h-[3.500px] w-[3.500px] rounded-full bg-[#171b20]" />}
    {alert && <i className="absolute right-0 top-[2.500px] flex h-[10px] w-[10px] items-center justify-center rounded-full bg-[#ee3f3a] text-[7px] not-italic leading-none text-white">{alert}</i>}
  </div>
);

const Dock = () => (
  <div className="absolute left-[22px] top-[639px] flex h-[36px] w-[1035px] rounded-t-[2px] border-t border-[#98a3ad] bg-gradient-to-b from-[#8997a4] to-[#9ca7b1] pl-[3px] shadow-[0_-6px_16px_rgba(0,0,0,0.120)]">
    {apps.map((a, i) => <Slot key={i} open={a.open} alert={a.alert}>{a.icon}</Slot>)}
    <i className="mx-[6.300px] my-[3px] w-px shrink-0 bg-[#6d7882]" />
    {apps2.map((a, i) => <Slot key={i} open>{a}</Slot>)}
    <i className="mx-[6.300px] my-[3px] w-px shrink-0 bg-[#6d7882]" />
    <Slot><S><rect x="5" y="-1" width="14" height="7" fill="#35b5e5" /><path d="M1 4h13l4 4v15H1z" fill="#f0f0f0" /><path d="M6 5h13l4 4v14H6z" fill="#fbfbfb" /><path d="M6 5v18" stroke="#dcdcdc" /></S></Slot>
    <Slot><Mini><rect x="17" width="9" height="16" fill="#243f66" /><path d="M2 4h12M2 7h12M2 10h9" stroke="#b8c3cf" /></Mini></Slot>
    <Slot><Mini chrome><rect width="26" height="2" fill="#4d2350" /><rect width="7" height="16" fill="#45204b" /><path d="M9 6h13M9 9h10" stroke="#d3cbd6" /></Mini></Slot>
    <Slot><Mini chrome><rect width="26" height="2" fill="#e7a052" /><path d="M2 6h22M2 9h22M2 12h12" stroke="#e6d6c4" /></Mini></Slot>
    <Slot><Mini plain><path d="M2 3h22M2 6h20M2 9h14" stroke="#d0cccc" /></Mini></Slot>
    <Slot><Mini plain><path d="M2 3h22M2 6h20M2 9h14" stroke="#d0cccc" /></Mini></Slot>
    <Slot><Mini chrome><rect width="26" height="2" fill="#b7bdd5" /><path d="M8 6h10" stroke="#5a74d2" strokeWidth="2" /><path d="M2 12h10" stroke="#e0457d" strokeWidth="4" /><path d="M12 12h6" stroke="#f0982c" strokeWidth="4" /><path d="M18 12h6" stroke="#8748a8" strokeWidth="4" /></Mini></Slot>
    <Slot><Mini chrome><path d="M2 3h22M4 7h4M11 7h4M18 7h4M4 11h12" stroke="#c4cbc6" /></Mini></Slot>
    <Slot><S><path d="M3 3h18l-2 20H5z" fill="#dcdcda" /><path d="M6 7l1 14M12 7v14M18 7l-1 14" stroke="#d0d0ce" /><ellipse cx="12" cy="3" rx="9.500" ry="3" fill="#8b8d8e" stroke="#efefef" /><path d="M6 3l3-4 3 3 4-2 2 3-4 2H8z" fill="#f2f2f0" /></S></Slot>
  </div>
);

export default function App() {
  return (
    <div className="relative h-[675px] w-[1080px] overflow-hidden bg-gradient-to-b from-[#6ba4d6] via-[#5b86ad] via-20% to-[#0b2238] to-90% leading-[1.200] [font-family:Inter,'Liberation_Sans',sans-serif]">
      <MenuBar />
      <BackWindows />
      <div className="absolute left-0 top-[45px] flex h-[610px] w-[1080px] flex-col overflow-hidden rounded-b-[5px] rounded-t-[6px] bg-white shadow-[0_0_8px_rgba(0,0,0,0.300)]">
        <TabStrip />
        <Toolbar />
        <Bookmarks />
        <AdminBar />
        <div className="flex min-h-0 flex-1">
          <Sidebar />
          <Content />
        </div>
      </div>
      <Dock />
    </div>
  );
}
